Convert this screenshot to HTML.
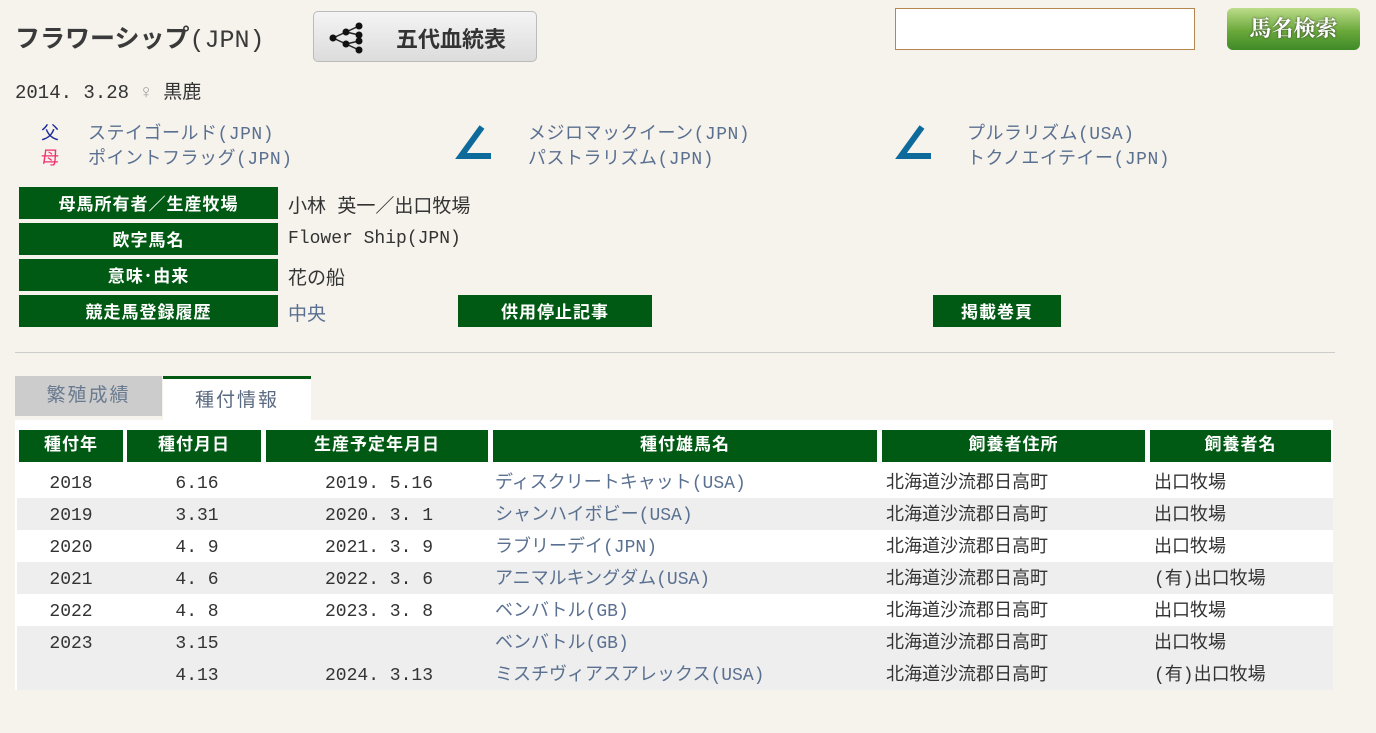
<!DOCTYPE html>
<html><head><meta charset="utf-8"><style>
*{margin:0;padding:0;box-sizing:border-box}
body{width:1376px;height:733px;background:#f6f2ec;font-family:"Liberation Mono","Noto Sans CJK JP",monospace;color:#333;position:relative;overflow:hidden}
.a{position:absolute;white-space:nowrap}
.lnk{color:#5a7090}
.gl{position:absolute;background:#005a14;color:#fff;font-weight:bold;font-size:17px;text-align:center;line-height:36px;font-family:"Liberation Sans","Noto Sans CJK JP",sans-serif;letter-spacing:1px}
.h{position:absolute;top:430px;height:32px;background:#005a14;color:#fff;font-weight:bold;font-size:17px;text-align:center;line-height:34px;letter-spacing:1px}
.r{position:absolute;left:17px;width:1316px;height:32px;font-size:18px;line-height:37px}
.r span{position:absolute;top:0}
.c1{left:0;width:108px;text-align:center}
.c2{left:110px;width:140px;text-align:center}
.c3{left:249px;width:226px;text-align:center}
.c4{left:478px;color:#5a7090}
.c5{left:869px}
.c6{left:1137px}
</style></head><body>
<div class="a" style="left:15px;top:19px;font-size:25px;font-weight:bold;color:#3a3a3a;font-family:'Liberation Sans','Noto Sans CJK JP',sans-serif">フラワーシップ<span style="font-weight:normal;font-family:'Liberation Mono','Noto Sans CJK JP',monospace">(JPN)</span></div>
<div class="a" style="left:313px;top:11px;width:224px;height:51px;border:1px solid #bbb;border-radius:5px;background:linear-gradient(#f4f4f4,#dcdcdc)">
<svg class="a" style="left:14px;top:10px" width="40" height="32" viewBox="0 0 40 32"><g stroke="#222" stroke-width="1.5"><line x1="5" y1="16" x2="18" y2="10"/><line x1="5" y1="16" x2="18" y2="22"/><line x1="18" y1="10" x2="31" y2="4"/><line x1="18" y1="10" x2="31" y2="13"/><line x1="18" y1="22" x2="31" y2="19"/><line x1="18" y1="22" x2="31" y2="28"/></g><g fill="#111"><circle cx="5" cy="16" r="3.5"/><circle cx="18" cy="10" r="3.5"/><circle cx="18" cy="22" r="3.5"/><circle cx="31" cy="4" r="3.5"/><circle cx="31" cy="13" r="3.5"/><circle cx="31" cy="19" r="3.5"/><circle cx="31" cy="28" r="3.5"/></g></svg>
<div class="a" style="left:82px;top:10px;font-size:22px;font-weight:bold;color:#333;font-family:'Liberation Sans','Noto Sans CJK JP',sans-serif">五代血統表</div></div>
<div class="a" style="left:895px;top:8px;width:300px;height:42px;background:#fff;border:1px solid #b5874f"></div>
<div class="a" style="left:1227px;top:8px;width:133px;height:42px;border-radius:6px;background:linear-gradient(#bddc8a,#6aa83a 55%,#3f8a28);color:#fff;font-family:'Liberation Serif','Noto Serif CJK SC',serif;font-weight:bold;font-size:22px;text-align:center;line-height:42px;text-shadow:0 0 2px #333">馬名検索</div>
<div class="a" style="left:15px;top:77px;font-size:19px;color:#333">2014. 3.28 <span style="color:#999">♀</span> 黒鹿</div>
<div class="a" style="left:41px;top:119px;font-size:18px;color:#1a2a9a">父</div>
<div class="a" style="left:41px;top:144px;font-size:18px;color:#f03070">母</div>
<div class="a lnk" style="left:88px;top:119px;font-size:18px;letter-spacing:0.5px">ステイゴールド(JPN)</div>
<div class="a lnk" style="left:88px;top:144px;font-size:18px;letter-spacing:0.5px">ポイントフラッグ(JPN)</div>
<svg class="a" style="left:454px;top:124px" width="38" height="38"><path d="M28 3 L7 32 L37 32" fill="none" stroke="#0e6a9a" stroke-width="6"/></svg>
<div class="a lnk" style="left:528px;top:119px;font-size:18px;letter-spacing:0.5px">メジロマックイーン(JPN)</div>
<div class="a lnk" style="left:528px;top:144px;font-size:18px;letter-spacing:0.5px">パストラリズム(JPN)</div>
<svg class="a" style="left:894px;top:124px" width="38" height="38"><path d="M28 3 L7 32 L37 32" fill="none" stroke="#0e6a9a" stroke-width="6"/></svg>
<div class="a lnk" style="left:967px;top:119px;font-size:18px;letter-spacing:0.5px">プルラリズム(USA)</div>
<div class="a lnk" style="left:967px;top:144px;font-size:18px;letter-spacing:0.5px">トクノエイテイー(JPN)</div>
<div class="gl" style="left:19px;top:187px;width:259px;height:32px">母馬所有者／生産牧場</div>
<div class="gl" style="left:19px;top:223px;width:259px;height:32px">欧字馬名</div>
<div class="gl" style="left:19px;top:259px;width:259px;height:32px">意味･由来</div>
<div class="gl" style="left:19px;top:295px;width:259px;height:32px">競走馬登録履歴</div>
<div class="gl" style="left:458px;top:295px;width:194px;height:32px">供用停止記事</div>
<div class="gl" style="left:933px;top:295px;width:128px;height:32px">掲載巻頁</div>
<div class="a" style="left:288px;top:191px;font-size:19px">小林 英一／出口牧場</div>
<div class="a" style="left:288px;top:229px;font-size:18px">Flower Ship(JPN)</div>
<div class="a" style="left:288px;top:263px;font-size:19px">花の船</div>
<div class="a lnk" style="left:288px;top:299px;font-size:19px">中央</div>
<div class="a" style="left:15px;top:352px;width:1320px;height:1px;background:#ccc"></div>
<div class="a" style="left:15px;top:376px;width:147px;height:40px;background:#cccccc;color:#6a7a90;font-size:19px;text-align:center;line-height:40px;letter-spacing:2px">繁殖成績</div>
<div class="a" style="left:163px;top:376px;width:148px;height:44px;background:#fff;border-top:3px solid #005a14;color:#5a6a80;font-size:19px;text-align:center;line-height:44px;letter-spacing:2px">種付情報</div>
<div class="a" style="left:15px;top:420px;width:1318px;height:270px;background:#fff"></div>
<div class="h" style="left:19px;width:104px">種付年</div>
<div class="h" style="left:127px;width:134px">種付月日</div>
<div class="h" style="left:266px;width:222px">生産予定年月日</div>
<div class="h" style="left:493px;width:384px">種付雄馬名</div>
<div class="h" style="left:882px;width:263px">飼養者住所</div>
<div class="h" style="left:1150px;width:181px">飼養者名</div>
<div class="r" style="top:466px;background:#fff"><span class="c1">2018</span><span class="c2">6.16</span><span class="c3">2019. 5.16</span><span class="c4">ディスクリートキャット(USA)</span><span class="c5">北海道沙流郡日高町</span><span class="c6">出口牧場</span></div>
<div class="r" style="top:498px;background:#eee"><span class="c1">2019</span><span class="c2">3.31</span><span class="c3">2020. 3. 1</span><span class="c4">シャンハイボビー(USA)</span><span class="c5">北海道沙流郡日高町</span><span class="c6">出口牧場</span></div>
<div class="r" style="top:530px;background:#fff"><span class="c1">2020</span><span class="c2">4. 9</span><span class="c3">2021. 3. 9</span><span class="c4">ラブリーデイ(JPN)</span><span class="c5">北海道沙流郡日高町</span><span class="c6">出口牧場</span></div>
<div class="r" style="top:562px;background:#eee"><span class="c1">2021</span><span class="c2">4. 6</span><span class="c3">2022. 3. 6</span><span class="c4">アニマルキングダム(USA)</span><span class="c5">北海道沙流郡日高町</span><span class="c6">(有)出口牧場</span></div>
<div class="r" style="top:594px;background:#fff"><span class="c1">2022</span><span class="c2">4. 8</span><span class="c3">2023. 3. 8</span><span class="c4">ベンバトル(GB)</span><span class="c5">北海道沙流郡日高町</span><span class="c6">出口牧場</span></div>
<div class="r" style="top:626px;background:#eee"><span class="c1">2023</span><span class="c2">3.15</span><span class="c3"></span><span class="c4">ベンバトル(GB)</span><span class="c5">北海道沙流郡日高町</span><span class="c6">出口牧場</span></div>
<div class="r" style="top:658px;background:#eee"><span class="c1"></span><span class="c2">4.13</span><span class="c3">2024. 3.13</span><span class="c4">ミスチヴィアスアレックス(USA)</span><span class="c5">北海道沙流郡日高町</span><span class="c6">(有)出口牧場</span></div>
</body></html>
